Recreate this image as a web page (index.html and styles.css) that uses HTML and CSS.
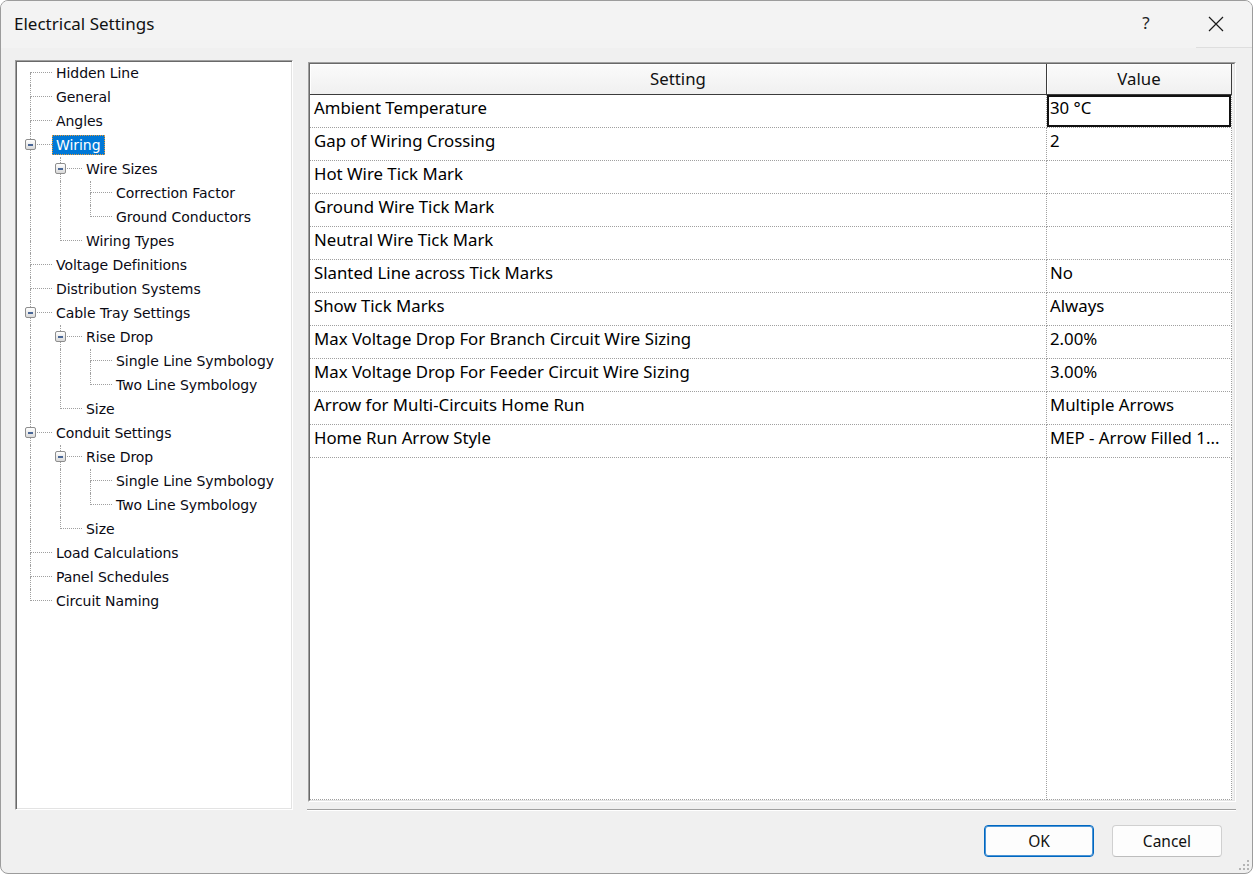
FILE: index.html
```html
<!DOCTYPE html>
<html lang="en">
<head>
    <meta charset="UTF-8">
    <title>Electrical Settings</title>
    <link rel="stylesheet" href="styles.css">
</head>
<body>
    <div class="window">
        <div class="titlebar">
            <span class="title">Electrical Settings</span>
            <span class="help">?</span>
            <span class="close">
                <svg width="16" height="16" viewBox="0 0 16 16"><path d="M1 1L15 15M15 1L1 15" stroke="#1a1a1a" stroke-width="1.2" fill="none"/></svg>
            </span>
        </div>

        <div class="content">
            <!-- tree -->
            <div class="tree">
                <div class="node"><i class="g own f"></i><span class="lbl">Hidden Line</span></div>
                <div class="node"><i class="g own t"></i><span class="lbl">General</span></div>
                <div class="node"><i class="g own t"></i><span class="lbl">Angles</span></div>
                <div class="node"><i class="g own t"><b class="exp"></b></i><span class="lbl selected">Wiring</span></div>
                <div class="node"><i class="g v"></i><i class="g own t"><b class="exp"></b></i><span class="lbl">Wire Sizes</span></div>
                <div class="node"><i class="g v"></i><i class="g v"></i><i class="g own t"></i><span class="lbl">Correction Factor</span></div>
                <div class="node"><i class="g v"></i><i class="g v"></i><i class="g own l"></i><span class="lbl">Ground Conductors</span></div>
                <div class="node"><i class="g v"></i><i class="g own l"></i><span class="lbl">Wiring Types</span></div>
                <div class="node"><i class="g own t"></i><span class="lbl">Voltage Definitions</span></div>
                <div class="node"><i class="g own t"></i><span class="lbl">Distribution Systems</span></div>
                <div class="node"><i class="g own t"><b class="exp"></b></i><span class="lbl">Cable Tray Settings</span></div>
                <div class="node"><i class="g v"></i><i class="g own t"><b class="exp"></b></i><span class="lbl">Rise Drop</span></div>
                <div class="node"><i class="g v"></i><i class="g v"></i><i class="g own t"></i><span class="lbl">Single Line Symbology</span></div>
                <div class="node"><i class="g v"></i><i class="g v"></i><i class="g own l"></i><span class="lbl">Two Line Symbology</span></div>
                <div class="node"><i class="g v"></i><i class="g own l"></i><span class="lbl">Size</span></div>
                <div class="node"><i class="g own t"><b class="exp"></b></i><span class="lbl">Conduit Settings</span></div>
                <div class="node"><i class="g v"></i><i class="g own t"><b class="exp"></b></i><span class="lbl">Rise Drop</span></div>
                <div class="node"><i class="g v"></i><i class="g v"></i><i class="g own t"></i><span class="lbl">Single Line Symbology</span></div>
                <div class="node"><i class="g v"></i><i class="g v"></i><i class="g own l"></i><span class="lbl">Two Line Symbology</span></div>
                <div class="node"><i class="g v"></i><i class="g own l"></i><span class="lbl">Size</span></div>
                <div class="node"><i class="g own t"></i><span class="lbl">Load Calculations</span></div>
                <div class="node"><i class="g own t"></i><span class="lbl">Panel Schedules</span></div>
                <div class="node"><i class="g own l"></i><span class="lbl">Circuit Naming</span></div>
            </div>

            <!-- settings grid -->
            <div class="gridwrap">
                <div class="gridframe">
                    <div class="grid">
                        <div class="hd">Setting</div>
                        <div class="hd">Value</div>

                        <div class="cell">Ambient Temperature</div>
                        <div class="cell val current">30 °C</div>
                        <div class="cell">Gap of Wiring Crossing</div>
                        <div class="cell val">2</div>
                        <div class="cell">Hot Wire Tick Mark</div>
                        <div class="cell val"></div>
                        <div class="cell">Ground Wire Tick Mark</div>
                        <div class="cell val"></div>
                        <div class="cell">Neutral Wire Tick Mark</div>
                        <div class="cell val"></div>
                        <div class="cell">Slanted Line across Tick Marks</div>
                        <div class="cell val">No</div>
                        <div class="cell">Show Tick Marks</div>
                        <div class="cell val">Always</div>
                        <div class="cell">Max Voltage Drop For Branch Circuit Wire Sizing</div>
                        <div class="cell val">2.00%</div>
                        <div class="cell">Max Voltage Drop For Feeder Circuit Wire Sizing</div>
                        <div class="cell val">3.00%</div>
                        <div class="cell">Arrow for Multi-Circuits Home Run</div>
                        <div class="cell val">Multiple Arrows</div>
                        <div class="cell">Home Run Arrow Style</div>
                        <div class="cell val">MEP - Arrow Filled 1...</div>

                        <div class="cell fill"></div>
                        <div class="cell val fill"></div>
                    </div>
                </div>
                <div class="sep"></div>
            </div>
        </div>

        <div class="footer">
            <button class="btn default">OK</button>
            <button class="btn">Cancel</button>
        </div>

        <svg class="grip" width="12" height="12" viewBox="0 0 12 12">
            <rect x="9" y="1" width="2" height="2" fill="#b4b4b4"/>
            <rect x="5" y="5" width="2" height="2" fill="#b4b4b4"/>
            <rect x="9" y="5" width="2" height="2" fill="#b4b4b4"/>
            <rect x="1" y="9" width="2" height="2" fill="#b4b4b4"/>
            <rect x="5" y="9" width="2" height="2" fill="#b4b4b4"/>
            <rect x="9" y="9" width="2" height="2" fill="#b4b4b4"/>
        </svg>
    </div>
</body>
</html>
```

FILE: styles.css
```css
body {
    margin: 0;
    background-color: #ffffff;
    font-family: "Noto Sans", sans-serif;
    color: #000;
}
.window {
    position: relative;
    width: 1253px;
    height: 874px;
    box-sizing: border-box;
    border: 1px solid #9c9c9c;
    border-radius: 8px;
    background-color: #f0f0f0;
    display: flex;
    flex-direction: column;
    overflow: hidden;
}

/* title bar */
.titlebar {
    height: 47px;
    display: flex;
    align-items: center;
    background-color: #f3f3f3;
}
.title {
    flex: 1;
    padding-left: 13px;
    padding-bottom: 2px;
    font-size: 17px;
    color: #111;
}
.help {
    width: 40px;
    text-align: center;
    margin-right: 30px;
    font-size: 17px;
    color: #222;
    padding-bottom: 4px;
}
.close {
    width: 56px;
    height: 46px;
    box-sizing: border-box;
    padding-right: 16px;
    display: flex;
    align-items: center;
    justify-content: center;
    border-bottom: 1px solid #dedede;
}

/* main area */
.content {
    height: 763px;
    box-sizing: border-box;
    padding: 12px 16px 0 14px;
    display: flex;
}
.tree {
    width: 278px;
    height: 750px;
    box-sizing: border-box;
    flex: none;
    background-color: #fff;
    border: 1px solid;
    border-color: #a0a0a0 #ffffff #ffffff #a0a0a0;
    box-shadow: inset 1px 1px #696969, inset -1px -1px #e3e3e3;
    padding-left: 1px;
    font-family: "DejaVu Sans", sans-serif;
    font-size: 14px;
    letter-spacing: -0.05px;
    color: #0a0a14;
}
.node {
    height: 24px;
    display: flex;
    align-items: center;
}
.g {
    flex: none;
    width: 30px;
    height: 24px;
    display: grid;
    grid-template-columns: 13px 1fr;
    grid-template-rows: 12px 12px;
    position: relative;
}
.g.own {
    width: 35px;
}
.g::before {
    content: "";
    grid-column: 2;
    grid-row: 1;
}
.g::after {
    content: "";
    grid-column: 2;
    grid-row: 2;
}
.v::before, .v::after,
.t::before, .t::after,
.l::before, .f::after {
    border-left: 1px dotted #a0a0a0;
}
.t::before, .l::before, .f::before {
    border-bottom: 1px dotted #a0a0a0;
}
.exp {
    position: absolute;
    left: 8px;
    top: 6px;
    width: 11px;
    height: 11px;
    box-sizing: border-box;
    border: 1px solid #8e8e8e;
    border-radius: 2px;
    background: linear-gradient(#ffffff, #d9d9d9);
    display: flex;
    align-items: center;
    justify-content: center;
}
.exp::before {
    content: "";
    width: 5px;
    height: 2px;
    background-color: #4a6796;
}
.lbl {
    height: 20px;
    line-height: 18px;
    box-sizing: border-box;
    padding: 0 3px;
    border: 1px dotted transparent;
    white-space: nowrap;
}
.lbl.selected {
    background-color: #0078d7;
    color: #fff;
    border-color: #e39a3c;
}

/* grid */
.gridwrap {
    flex: 1;
    margin-left: 15px;
    display: flex;
    flex-direction: column;
}
.gridframe {
    margin-top: 2px;
    height: 740px;
    box-sizing: border-box;
    border: 1px solid;
    border-color: #a0a0a0 #ffffff #ffffff #a0a0a0;
}
.grid {
    height: 100%;
    box-sizing: border-box;
    border: 1px solid;
    border-color: #696969 #e3e3e3 #e3e3e3 #696969;
    background-color: #f0f0f0;
    display: grid;
    grid-template-columns: 737px 185px;
    grid-template-rows: 31px repeat(11, 33px) 1fr;
    font-size: 16.8px;
}
.hd {
    background: linear-gradient(#fbfbfb, #f0f0f0);
    border-right: 1px solid #3c3c3c;
    border-bottom: 1px solid #3c3c3c;
    box-shadow: inset 1px 1px #ffffff;
    text-align: center;
    line-height: 30px;
    color: #111;
}
.cell {
    background-color: #fff;
    border-right: 1px dotted #a0a0a0;
    border-bottom: 1px dotted #a0a0a0;
    padding: 0 4px;
    line-height: 26px;
    white-space: nowrap;
    overflow: hidden;
}
.cell.val {
    padding-left: 3px;
}
.cell.current {
    box-shadow: inset 0 0 0 2px #111;
}
.sep {
    margin-top: auto;
    border-top: 1px solid #a0a0a0;
    border-bottom: 1px solid #ffffff;
    margin-left: -1px;
}

/* buttons */
.footer {
    flex: 1;
    display: flex;
    justify-content: flex-end;
    align-items: flex-start;
    gap: 18px;
    padding: 14px 30px 0 0;
}
.btn {
    width: 110px;
    height: 32px;
    border: 1px solid #d0d0d0;
    border-bottom-color: #bdbdbd;
    border-radius: 4px;
    background-color: #fdfdfd;
    font-family: "Noto Sans", sans-serif;
    font-size: 15.5px;
    color: #111;
    padding: 0;
}
.btn.default {
    border-color: #0067c0;
    box-shadow: inset 0 0 0 1px #4a94d6;
}
.grip {
    position: absolute;
    right: 2px;
    bottom: 2px;
}
```
